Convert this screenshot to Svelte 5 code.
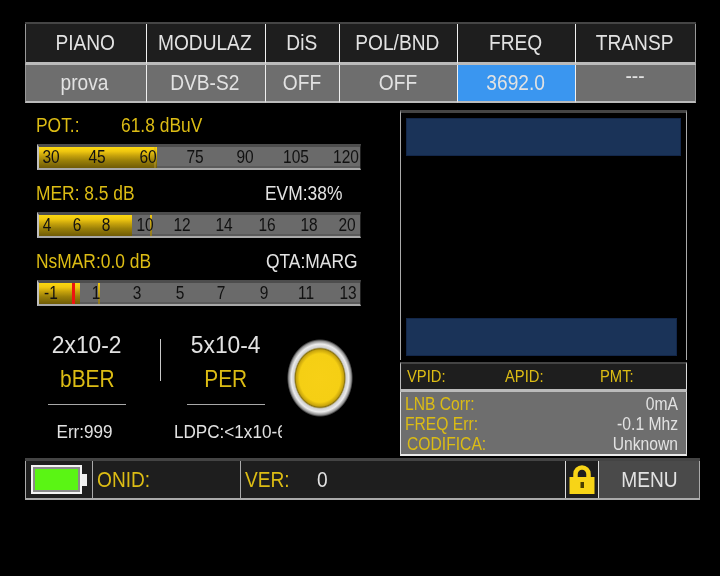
<script>
  const heads = [
    ["PIANO", "prova"],
    ["MODULAZ", "DVB-S2"],
    ["DiS", "OFF"],
    ["POL/BND", "OFF"],
    ["FREQ", "3692.0"],
    ["TRANSP", "---"],
  ];

  // tick x is measured from the inner left edge of the bar
  const bars = [
    { fill: 118, mark: 115, ticks: [["30", 12], ["45", 58], ["60", 109], ["75", 156], ["90", 206], ["105", 257], ["120", 307]] },
    { fill: 93, mark: 111, ticks: [["4", 8], ["6", 38], ["8", 67], ["10", 106], ["12", 143], ["14", 185], ["16", 228], ["18", 270], ["20", 308]] },
    { fill: 41, mark: 59, red: 33, ticks: [["-1", 12], ["1", 57], ["3", 98], ["5", 141], ["7", 182], ["9", 225], ["11", 267], ["13", 309]] },
  ];
</script>

<div class="screen">
  <div class="head">
    {#each heads as [title, value]}
      <div class="cell title"><span class="sq">{title}</span></div>
    {/each}
    {#each heads as [title, value]}
      <div class="cell value" class:active={title === "FREQ"} class:dash={title === "TRANSP"}><span class="sq">{value}</span></div>
    {/each}
  </div>

  <div class="main">
    <div class="left">
      <div class="label-row first">
        <span class="sq-l yellow pot">POT.:</span>
        <span class="sq-l yellow">61.8 dBuV</span>
      </div>
      {#snippet meter(bar)}
        <div class="bar">
          <div class="fill" style="width: {bar.fill}px"></div>
          <div class="mark" style="left: {bar.mark}px"></div>
          {#if bar.red}<div class="red" style="left: {bar.red}px"></div>{/if}
          {#each bar.ticks as [t, x]}
            <span class="tick" style="left: {x}px">{t}</span>
          {/each}
        </div>
      {/snippet}
      {@render meter(bars[0])}
      <div class="label-row between">
        <span class="sq-l yellow">MER: 8.5 dB</span>
        <span class="sq-l white evm">EVM:38%</span>
      </div>
      {@render meter(bars[1])}
      <div class="label-row between">
        <span class="sq-l yellow">NsMAR:0.0 dB</span>
        <span class="sq-l white qta">QTA:MARG</span>
      </div>
      {@render meter(bars[2])}

      <div class="errors">
        <div class="rate ber">
          <div class="big"><span class="num">2x10-2</span></div>
          <div class="big yellow"><span class="sq">bBER</span></div>
          <hr />
          <div class="small err"><span class="num">Err:999</span></div>
        </div>
        <div class="split"></div>
        <div class="rate per">
          <div class="big"><span class="num">5x10-4</span></div>
          <div class="big yellow"><span class="sq">PER</span></div>
          <hr />
          <div class="small clip"><span class="num left-o">LDPC:&lt;1x10-6</span></div>
        </div>
        <div class="lamp"></div>
      </div>
    </div>

    <div class="right">
      <div class="display">
        <div class="blue"></div>
        <div class="blue low"></div>
      </div>
      <div class="pids">
        <span class="sq-l yellow">VPID:</span>
        <span class="sq-l yellow">APID:</span>
        <span class="sq-l yellow">PMT:</span>
      </div>
      <div class="info">
        <div class="info-row"><span class="sq-l yellow">LNB Corr:</span><span class="sq-r">0mA</span></div>
        <div class="info-row"><span class="sq-l yellow">FREQ Err:</span><span class="sq-r">-0.1 Mhz</span></div>
        <div class="info-row last"><span class="sq-l yellow">CODIFICA:</span><span class="sq-r">Unknown</span></div>
      </div>
    </div>
  </div>

  <div class="foot">
    <div class="batt-cell">
      <div class="batt"><div class="charge"></div></div>
      <div class="nub"></div>
    </div>
    <div class="onid"><span class="sq-l yellow">ONID:</span></div>
    <div class="ver">
      <span class="sq-l yellow">VER:</span>
      <span class="sq-l white zero">0</span>
    </div>
    <div class="lock">
      <svg width="26" height="30" viewBox="0 0 26 30">
        <path d="M6.5 14V9a6.5 6.5 0 0 1 13 0v5" fill="none" stroke="#f7d417" stroke-width="4.5" />
        <rect x="0.5" y="12" width="25" height="17" fill="#f7d417" />
        <rect x="11.5" y="17" width="3.5" height="6" fill="#4a3f00" />
      </svg>
    </div>
    <div class="menu"><span class="sq">MENU</span></div>
  </div>
</div>

<style>
  :global(body) {
    margin: 0;
    background: #000;
  }

  .screen {
    width: 720px;
    height: 576px;
    box-sizing: border-box;
    padding: 22px 0 0 25px;
    background: #000;
    color: #e2e2e2;
    font-family: "Liberation Sans", Arial, sans-serif;
    font-size: 22px;
    filter: blur(0.45px);
    overflow: hidden;
  }

  .sq,
  .sq-l,
  .sq-r,
  .num {
    display: inline-block;
    white-space: nowrap;
    transform: scaleX(0.87);
  }
  .num {
    transform: scaleX(0.95);
  }
  .left-o {
    transform-origin: left center;
  }
  .sq-l {
    transform-origin: left center;
  }
  .sq-r {
    transform-origin: right center;
  }

  .yellow {
    color: #dcbc14;
  }
  .white {
    color: #e2e2e2;
  }

  .head {
    width: 671px;
    display: grid;
    grid-template-columns: 121px 119px 74px 118px 118px 121px;
    grid-template-rows: 41px 38px;
    box-sizing: border-box;
    border-top: 2px solid #454545;
  }
  .cell {
    display: flex;
    align-items: center;
    justify-content: center;
    box-sizing: border-box;
    border-left: 1px solid #f0f0f0;
    padding-right: 2px;
  }
  .cell:nth-child(6n + 1) {
    border-left-color: #999;
  }
  .cell:nth-child(6n) {
    border-right: 1px solid #999;
  }
  .title {
    background: #1e1e1e;
    border-bottom: 3px solid #bbb;
  }
  .value {
    background: #6e6e6e;
    border-bottom: 2px solid #bbb;
  }
  .active {
    background: #3a96f0;
  }
  .dash {
    padding-bottom: 14px;
  }

  .main {
    display: flex;
    height: 348px;
    margin-top: 7px;
  }
  .left {
    width: 375px;
    padding-left: 11px;
    box-sizing: border-box;
  }
  .label-row {
    display: flex;
    height: 22px;
    line-height: 22px;
    width: 324px;
    margin: 12px 0 8px;
    font-size: 20px;
  }
  .label-row.first {
    margin-top: 4px;
    margin-bottom: 8px;
  }
  .pot {
    width: 85px;
  }
  .between {
    justify-content: space-between;
  }
  .evm {
    width: 92px;
    margin-right: 3px;
  }
  .qta {
    width: 92px;
    margin-right: 2px;
  }

  .bar {
    position: relative;
    margin-left: 1px;
    width: 324px;
    height: 26px;
    box-sizing: border-box;
    background: #6a6a6a;
    border-top: 3px solid #4d4d4d;
    border-bottom: 2px solid #a8a8a8;
    border-left: 2px solid #c0c0c0;
    border-right: 1px solid #222;
    box-shadow: inset 0 -2px 0 #5a5a5a;
    overflow: hidden;
  }
  .fill {
    position: absolute;
    left: 0;
    top: 0;
    bottom: 0;
    background: linear-gradient(#fcd80f 0%, #f0c810 20%, #c8a40c 40%, #9a8008 65%, #6e5a06 100%);
  }
  .mark {
    position: absolute;
    top: 0;
    bottom: 0;
    width: 2px;
    background: linear-gradient(#f0c810, #8a7420);
  }
  .red {
    position: absolute;
    top: 0;
    bottom: 0;
    width: 3px;
    background: #ee1410;
  }
  .tick {
    position: absolute;
    top: 0;
    font-size: 18px;
    line-height: 21px;
    color: #111;
    transform: translateX(-50%) scaleX(0.86);
  }

  .errors {
    display: flex;
    margin-top: 22px;
    position: relative;
  }
  .rate {
    text-align: center;
    width: 78px;
  }
  .ber {
    margin-left: 12px;
  }
  .per {
    margin-left: 26px;
  }
  .big {
    height: 34px;
    line-height: 34px;
    font-size: 24px;
    white-space: nowrap;
  }
  .rate hr {
    margin: 8px 0 0;
    border: 0;
    height: 1px;
    background: #a8a8a8;
  }
  .small {
    margin-top: 15px;
    font-size: 18px;
    line-height: 24px;
    white-space: nowrap;
  }
  .err {
    padding-right: 4px;
  }
  .clip {
    margin-left: -13px;
    width: 108px;
    overflow: hidden;
    text-align: left;
  }
  .split {
    width: 1px;
    height: 42px;
    margin: 11px 0 0 34px;
    background: #c8c8c8;
  }
  .lamp {
    width: 66px;
    height: 78px;
    margin: 11px 0 0 22px;
    background: radial-gradient(closest-side, #f7d016 0%, #f5cf14 62%, #c8a40c 72%, #8a7410 75%, #d0d0d0 79%, #ececec 87%, #8a8a8a 95%, #000 100%);
  }

  .right {
    width: 287px;
    display: flex;
    flex-direction: column;
  }
  .display {
    height: 250px;
    box-sizing: border-box;
    border-top: 3px solid #444;
    border-left: 1px solid #aaa;
    border-right: 1px solid #aaa;
    padding: 6px 6px 5px 6px;
    display: flex;
    flex-direction: column;
    justify-content: space-between;
  }
  .blue {
    height: 36px;
    background: #1a3358;
    box-shadow: 0 0 0 1px #13274a;
  }
  .low {
    width: 269px;
  }
  .pids {
    margin-top: 2px;
    height: 30px;
    box-sizing: border-box;
    background: #1e1e1e;
    border-top: 2px solid #444;
    border-bottom: 3px solid #bbb;
    border-left: 1px solid #bbb;
    border-right: 1px solid #ddd;
    display: grid;
    grid-template-columns: 98px 95px 1fr;
    align-items: center;
    padding-left: 6px;
    font-size: 17px;
  }
  .info {
    height: 64px;
    box-sizing: border-box;
    background: #6e6e6e;
    border-bottom: 2px solid #e8e8e8;
    border-left: 1px solid #ddd;
    border-right: 1px solid #ddd;
    padding: 2px 8px 0 4px;
    font-size: 18px;
  }
  .info-row {
    display: flex;
    justify-content: space-between;
    height: 20px;
    line-height: 20px;
    white-space: nowrap;
  }
  .last .yellow {
    margin-left: 2px;
  }

  .foot {
    width: 675px;
    height: 42px;
    box-sizing: border-box;
    display: grid;
    grid-template-columns: 67px 148px 325px 33px 102px;
    border-top: 3px solid #444;
    border-bottom: 2px solid #aaa;
    background: #1e1e1e;
  }
  .foot > div {
    display: flex;
    align-items: center;
    box-sizing: border-box;
    border-left: 1px solid #aaa;
    padding-left: 4px;
  }
  .batt-cell {
    padding-left: 5px !important;
  }
  .batt {
    width: 51px;
    height: 29px;
    box-sizing: border-box;
    border: 2px solid #f4f4f4;
    background: #8a8a8a;
    padding: 2px;
  }
  .charge {
    height: 100%;
    width: 100%;
    background: #5af514;
  }
  .nub {
    width: 5px;
    height: 12px;
    background: #f0f0f0;
  }
  .ver .zero {
    margin-left: 21px;
  }
  .lock {
    justify-content: center;
    padding-left: 0 !important;
    border-left-color: #ddd !important;
  }
  .menu {
    justify-content: center;
    background: #4a4a4a;
    padding-left: 0 !important;
    border-left-color: #ddd !important;
    border-right: 1px solid #aaa;
  }
</style>
